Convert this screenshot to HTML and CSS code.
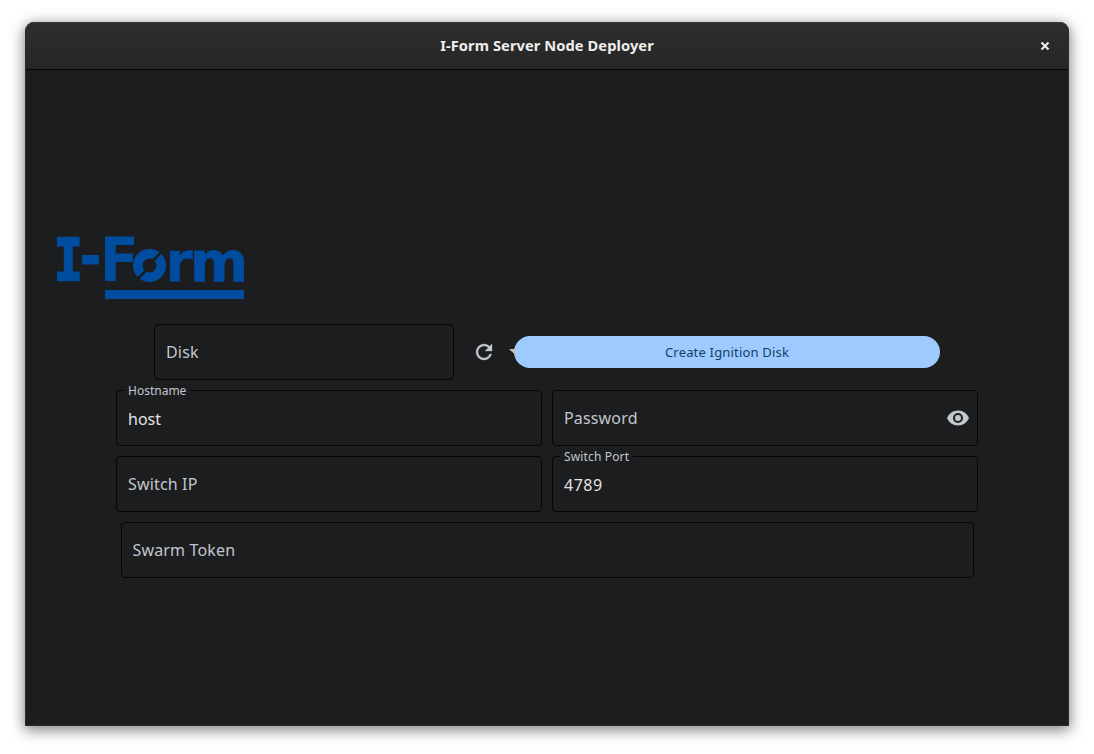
FILE: index.html
```html
<!DOCTYPE html>
<html lang="en">
<head>
<meta charset="utf-8">
<title>I-Form Server Node Deployer</title>
<link rel="stylesheet" href="styles.css">
</head>
<body>
<div class="window">
  <header class="titlebar">
    <span></span>
    <span class="title">I-Form Server Node Deployer</span>
    <svg class="close" width="10" height="10" viewBox="0 0 10 10"><path d="M1.5 1.5l7 7M8.5 1.5l-7 7" stroke="#eeeeec" stroke-width="2.1"/></svg>
  </header>
  <main class="content">
    <svg class="logo" width="188" height="63" viewBox="0 0 188 63">
      <g fill="#004c9f" stroke="#004c9f">
        <text class="slab" x="-3" y="43" textLength="28.6" lengthAdjust="spacingAndGlyphs" stroke-width="2.6">I</text>
        <text class="wordmark" x="22.8" y="40.4" textLength="21.5" lengthAdjust="spacingAndGlyphs" stroke-width="1">-</text>
        <text class="wordmark" x="42.8" y="44" textLength="39" lengthAdjust="spacingAndGlyphs" stroke-width="0">F</text>
        <text class="lower" x="108.6" y="44" textLength="27" lengthAdjust="spacingAndGlyphs" stroke-width="0.6">r</text>
        <text class="lower" x="133" y="44" textLength="58" lengthAdjust="spacingAndGlyphs" stroke-width="0.9">m</text>
        <circle cx="92.5" cy="28.5" r="11.7" fill="none" stroke-width="9.6"/>
        <rect x="48" y="53" width="139" height="9" stroke="none"/>
      </g>
      <path d="M95 24.5l12-12M90 32.5l-12 12" stroke="#1b1d1e" stroke-width="2.6"/>
    </svg>
    <form class="form">
      <div class="row disk-row">
        <div class="field disk"><span class="hint">Disk</span></div>
        <svg class="refresh" width="24" height="24" viewBox="0 0 24 24"><path fill="#c3c6cf" stroke="#c3c6cf" stroke-width=".3" d="M17.65 6.35A7.96 7.96 0 0 0 12 4a8 8 0 1 0 7.73 10h-2.08A6 6 0 1 1 12 6c1.66 0 3.14.69 4.22 1.78L13 11h7V4z"/></svg>
        <div class="create">
          <svg class="pointer" width="7" height="8" viewBox="0 0 7 8"><path d="M0 1h7v6.5z" fill="#c3c0c2"/></svg>
          <span class="create-label">Create Ignition Disk</span>
        </div>
      </div>
      <div class="row">
        <div class="field"><span class="label">Hostname</span><span class="value">host</span></div>
        <div class="field"><span class="hint">Password</span>
          <svg class="eye" width="24" height="24" viewBox="0 0 24 24"><path fill="#c3c6cf" d="M12 4.5C7 4.5 2.73 7.61 1 12c1.73 4.39 6 7.5 11 7.5s9.27-3.11 11-7.5c-1.73-4.39-6-7.5-11-7.5zM12 17a5 5 0 1 1 0-10 5 5 0 0 1 0 10zm0-8a3 3 0 1 0 0 6 3 3 0 0 0 0-6z"/></svg>
        </div>
      </div>
      <div class="row">
        <div class="field"><span class="hint">Switch IP</span></div>
        <div class="field"><span class="label port">Switch Port</span><span class="value number">4789</span></div>
      </div>
      <div class="row token-row">
        <div class="field"><span class="hint">Swarm Token</span></div>
      </div>
    </form>
  </main>
</div>
</body>
</html>
```

FILE: styles.css
```css
* { box-sizing: border-box; }
body {
  margin: 0;
  height: 754px;
  padding: 22px 25px 28px;
  background: #fff;
  overflow: hidden;
  font-family: "Noto Sans", "Open Sans", sans-serif;
}
.window {
  height: 704px;
  display: flex;
  flex-direction: column;
  background: #1b1d1e;
  border: 1px solid #2a2a2a;
  border-top: 0;
  border-radius: 9px 9px 0 0;
  box-shadow: 0 3px 14px 1px rgba(0, 0, 0, .5);
}
.titlebar {
  height: 48px;
  flex: none;
  display: grid;
  grid-template-columns: 1fr auto 1fr;
  align-items: center;
  padding: 0 18px;
  background: linear-gradient(#2d2d2d, #262626);
  border-top: 1px solid #3a3a3a;
  border-bottom: 1px solid #070707;
  border-radius: 8px 8px 0 0;
}
.title {
  color: #eeeeec;
  font-size: 14.67px;
  font-weight: 700;
  line-height: 20px;
  letter-spacing: .07px;
  padding-bottom: 2px;
}
.close { justify-self: end; }
.content { padding: 167px 90px 0 31px; }
.logo { display: block; overflow: visible; }
.slab { font: 700 57px "DejaVu Sans Mono", monospace; }
.wordmark { font: 700 60.4px "DejaVu Sans", sans-serif; }
.lower { font: 700 56px "DejaVu Sans", sans-serif; }
.form {
  margin: 23.5px 0 0 59px;
  display: flex;
  flex-direction: column;
  gap: 10px;
}
.row { display: flex; gap: 10px; }
.disk-row { padding: 0 38px; align-items: center; gap: 0; }
.token-row { padding: 0 4.5px; }
.field {
  position: relative;
  flex: 1;
  height: 56px;
  padding: 0 7px 0 11px;
  display: flex;
  align-items: center;
  justify-content: space-between;
  border: 1px solid #050506;
  border-radius: 4px;
}
.disk { flex: 0 0 300px; }
.hint, .value {
  font-size: 16px;
  line-height: 24px;
  letter-spacing: .16px;
  white-space: nowrap;
  color: #c3c6cf;
}
.value { color: #e2e2e5; padding-top: 2px; letter-spacing: 0; }
.number { letter-spacing: .5px; }
.label {
  position: absolute;
  left: 7px;
  top: -8px;
  padding: 0 4px;
  background: #1b1d1e;
  color: #c3c6cf;
  font-size: 12px;
  line-height: 16px;
  white-space: nowrap;
}
.port { letter-spacing: .15px; }
.refresh { margin: 0 18px; }
.create {
  position: relative;
  z-index: 0;
  flex: 1;
  height: 32px;
  display: flex;
  align-items: center;
  justify-content: center;
  border-radius: 16px;
  background: #9ecaff;
  color: #123f68;
}
.pointer { position: absolute; left: -5px; top: 12px; z-index: -1; }
.create-label { font-size: 13px; line-height: 20px; letter-spacing: .18px; }
```
